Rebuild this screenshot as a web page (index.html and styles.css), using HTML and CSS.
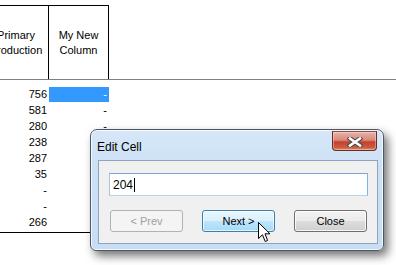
FILE: index.html
```html
<!DOCTYPE html>
<html>
<head>
<meta charset="utf-8">
<link rel="stylesheet" href="styles.css">
</head>
<body>
<div class="page">
  <div class="sheet">
    <div class="head">
      <div class="hrow">
        <div class="hcell c1">Primary<br>Production</div>
        <div class="hcell c2">My New<br>Column</div>
      </div>
    </div>
    <div class="data">
      <div class="row"><div class="cell c1">756</div><div class="cell c2 sel">-</div></div>
      <div class="row"><div class="cell c1">581</div><div class="cell c2">-</div></div>
      <div class="row"><div class="cell c1">280</div><div class="cell c2">-</div></div>
      <div class="row"><div class="cell c1">238</div><div class="cell c2"></div></div>
      <div class="row"><div class="cell c1">287</div><div class="cell c2"></div></div>
      <div class="row"><div class="cell c1">35</div><div class="cell c2"></div></div>
      <div class="row"><div class="cell c1">-</div><div class="cell c2"></div></div>
      <div class="row"><div class="cell c1">-</div><div class="cell c2"></div></div>
      <div class="row"><div class="cell c1">266</div><div class="cell c2"></div></div>
    </div>
  </div>

  <div class="dialog">
    <div class="titlebar">Edit Cell</div>
    <div class="closebtn">
      <svg width="16" height="10" viewBox="0 0 16 10">
        <path d="M3 1.5 L13 8.5 M13 1.5 L3 8.5" stroke="#4a4a4a" stroke-width="4.6" stroke-linecap="square" fill="none"/>
        <path d="M3 1.5 L13 8.5 M13 1.5 L3 8.5" stroke="#ffffff" stroke-width="2.6" stroke-linecap="square" fill="none"/>
      </svg>
    </div>
    <div class="client">
      <div class="textbox">204<span class="caret"></span></div>
      <div class="buttons">
        <div class="btn disabled">&lt; Prev</div>
        <div class="btn hot">Next &gt;</div>
        <div class="btn">Close</div>
      </div>
    </div>
  </div>

  <svg class="cursor" width="13" height="21" viewBox="0 0 13 21">
    <path d="M0.5 0.5 L0.5 16.5 L4.5 12.8 L7.2 19.5 L9.6 18.5 L7 11.8 L12 11.8 Z" fill="#fff" stroke="#000" stroke-width="1" stroke-linejoin="miter"/>
  </svg>
</div>
</body>
</html>
```

FILE: styles.css
```css
html, body {
  margin: 0;
  padding: 0;
  background: #ffffff;
}
.page {
  position: relative;
  width: 396px;
  height: 265px;
  overflow: hidden;
  font-family: "Liberation Sans", Arial, sans-serif;
  font-size: 11px;
  color: #000;
}
.sheet {
  overflow: hidden;
}
.head {
  padding-top: 5px;
  border-bottom: 1px solid #808080;
}
.hrow {
  display: flex;
}
.hcell {
  box-sizing: border-box;
  height: 74px;
  border-top: 1px solid #000;
  border-right: 1px solid #000;
  display: flex;
  align-items: center;
  justify-content: center;
  text-align: center;
  line-height: 15px;
  padding-top: 1px;
}
.c1 {
  box-sizing: border-box;
  width: 65px;
  margin-left: -16px;
  flex: none;
}
.c2 {
  box-sizing: border-box;
  width: 60px;
  flex: none;
}
.data {
  width: 109px;
  padding-top: 7px;
  padding-bottom: 1px;
  border-bottom: 1px solid #000;
}
.row {
  display: flex;
  height: 16px;
}
.cell {
  text-align: right;
  padding-right: 2px;
  line-height: 15px;
  height: 15px;
}
.cell.c2 {
  padding-right: 2px;
}
.sel {
  background: #3399ff;
  color: #fff;
}

/* dialog */
.dialog {
  position: absolute;
  left: 90px;
  top: 129px;
  width: 294px;
  height: 122px;
  box-sizing: border-box;
  border: 1px solid #4d5866;
  border-radius: 7px 7px 6px 6px;
  background: linear-gradient(to bottom, #d7e7f8 0%, #cde1f6 30%, #c8ddf3 100%);
  box-shadow: inset 0 0 0 1px rgba(255,255,255,0.75), 4px 5px 10px rgba(0,0,0,0.55);
  padding: 0 5px 6px 7px;
  display: flex;
  flex-direction: column;
  font-family: "Liberation Sans", Arial, sans-serif;
}
.titlebar {
  height: 30px;
  box-sizing: border-box;
  padding-top: 10px;
  font-size: 12px;
  line-height: 14px;
  color: #000;
  margin-left: -1px;
}
.closebtn {
  position: absolute;
  top: 1px;
  right: 6px;
  width: 45px;
  height: 20px;
  box-sizing: border-box;
  border: 1px solid #6b2a22;
  border-top-color: #8a4a40;
  border-radius: 0 0 4px 4px;
  background: linear-gradient(to bottom, #e7b3a8 0%, #d88a7a 45%, #c2422c 55%, #cb5a40 85%, #dd8a6a 100%);
  box-shadow: inset 0 0 0 1px rgba(255,255,255,0.35);
  display: flex;
  align-items: center;
  justify-content: center;
}
.closebtn svg {
  display: block;
  margin-top: 1px;
}
.client {
  flex: 1;
  background: #f0f0f0;
  border: 1px solid #8fa4bc;
  padding: 12px 9px 0 10px;
  display: flex;
  flex-direction: column;
}
.textbox {
  box-sizing: border-box;
  height: 23px;
  background: #fff;
  border: 1px solid #abadb3;
  border-top-color: #7ea4cf;
  border-right-color: #7eb4ea;
  border-bottom-color: #b7d3ee;
  border-left-color: #a8c3e0;
  padding: 4px 0 0 3px;
  font-size: 12px;
  line-height: 14px;
  display: flex;
  align-items: flex-start;
}
.caret {
  display: inline-block;
  width: 1px;
  height: 14px;
  background: #000;
  margin-left: 1px;
}
.buttons {
  margin-top: 14px;
  padding: 0 1px;
  display: flex;
  justify-content: space-between;
}
.btn {
  box-sizing: border-box;
  width: 73px;
  height: 22px;
  border: 1px solid #707070;
  border-radius: 3px;
  background: linear-gradient(to bottom, #f2f2f2 0%, #ebebeb 50%, #dddddd 51%, #cfcfcf 100%);
  box-shadow: inset 0 0 0 1px rgba(255,255,255,0.8);
  font-size: 11px;
  line-height: 20px;
  text-align: center;
  color: #000;
}
.btn.disabled {
  border-color: #adb2b5;
  background: #f4f4f4;
  box-shadow: none;
  color: #a0a0a0;
}
.btn.hot {
  border-color: #3c7fb1;
  background: linear-gradient(to bottom, #eaf6fd 0%, #d9f0fc 50%, #bee6fd 51%, #a7d9f5 100%);
  box-shadow: inset 0 0 0 1px rgba(255,255,255,0.7);
}
.cursor {
  position: absolute;
  left: 258px;
  top: 222px;
}
```
